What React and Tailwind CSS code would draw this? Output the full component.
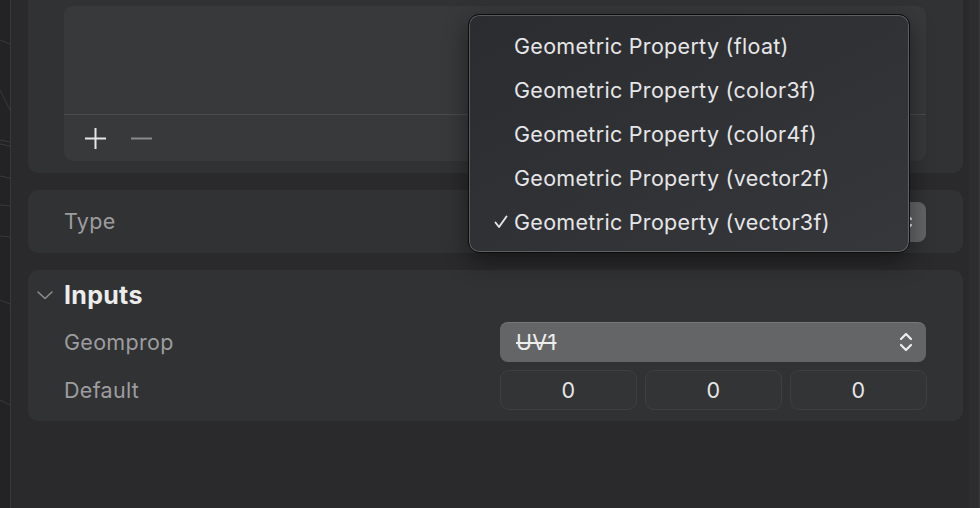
import React from "react";

const font = { fontFamily: "Inter, 'Noto Sans', sans-serif", letterSpacing: "0.3px" };

function UpDown({ className = "" }) {
  return (
    <svg width="14" height="22" viewBox="0 0 14 22" className={className} fill="none" stroke="currentColor" strokeWidth="2.2" strokeLinecap="round" strokeLinejoin="round">
      <polyline points="2,8 7,3 12,8" />
      <polyline points="2,14 7,19 12,14" />
    </svg>
  );
}

function Check() {
  return (
    <svg width="14" height="14" viewBox="0 0 14 14" fill="none" stroke="currentColor" strokeWidth="1.9" strokeLinecap="round" strokeLinejoin="round">
      <polyline points="1.5,7.5 5,12 12.5,1.5" />
    </svg>
  );
}

const items = [
  "Geometric Property (float)",
  "Geometric Property (color3f)",
  "Geometric Property (color4f)",
  "Geometric Property (vector2f)",
  "Geometric Property (vector3f)",
];

export default function App() {
  return (
    <div className="relative w-[980px] h-[508px] overflow-hidden flex bg-[#2a2a2c] antialiased" style={font}>
      {/* left viewport strip */}
      <div className="w-[11px] h-full bg-[#232324] border-r border-[#39393b] relative overflow-hidden">
        <svg width="10" height="508" className="absolute inset-0" stroke="#3a3a3a" strokeWidth="1">
          <line x1="0" y1="40" x2="10" y2="44" />
          <line x1="0" y1="90" x2="10" y2="110" />
          <line x1="0" y1="140" x2="10" y2="142" />
          <line x1="0" y1="176" x2="10" y2="178" />
          <line x1="0" y1="205" x2="10" y2="206" />
          <line x1="0" y1="236" x2="10" y2="237" />
          <line x1="0" y1="300" x2="10" y2="304" />
          <line x1="0" y1="400" x2="10" y2="405" />
          <line x1="0" y1="144" x2="10" y2="146" />
        </svg>
      </div>

      {/* main inspector */}
      <div className="flex-1 flex flex-col gap-[17px] pl-[17px] pr-[6px]">
        {/* top card (list) */}
        <div className="bg-[#313234] rounded-b-[10px] pt-[6px] pb-[12px] pl-[36px] pr-[37px]">
          <div className="bg-[#38393b] rounded-[9px] h-[155px] flex flex-col">
            <div className="flex-1 border-b border-[#4a4b4d]" />
            <div className="h-[46px] flex items-center pl-[21px] gap-[25px]">
              <svg width="21" height="21" viewBox="0 0 21 21" stroke="#e6e6e6" strokeWidth="2">
                <line x1="10.5" y1="0" x2="10.5" y2="21" />
                <line x1="0" y1="10.5" x2="21" y2="10.5" />
              </svg>
              <svg width="21" height="21" viewBox="0 0 21 21" stroke="#8a8a8c" strokeWidth="2">
                <line x1="0" y1="10.5" x2="21" y2="10.5" />
              </svg>
            </div>
          </div>
        </div>

        {/* Type card */}
        <div className="bg-[#313234] rounded-[10px] h-[63px] flex items-center pl-[36px] pr-[37px]">
          <span className="text-[21.5px] text-[#9d9d9f] w-[436px]">Type</span>
          <div className="flex-1 h-[40px] bg-[#646567] rounded-[8px] flex items-center justify-end pl-[16px] pr-[13px] text-[#ededed]">
            <UpDown />
          </div>
        </div>

        {/* Inputs card */}
        <div className="bg-[#313234] rounded-[10px] pt-[10px] pb-[11px] pl-[8px] pr-[37px] flex flex-col">
          <div className="flex items-center h-[30px]">
            <svg width="16" height="10" viewBox="0 0 16 10" fill="none" stroke="#8e8e90" strokeWidth="1.5" strokeLinecap="round" strokeLinejoin="round" className="ml-[1px] mr-[11px]">
              <polyline points="1,2 8,8.5 15,2" />
            </svg>
            <span className="text-[25px] font-bold text-[#ececec] leading-none">Inputs</span>
          </div>
          <div className="flex items-center mt-[12px] pl-[28px]">
            <span className="text-[21.5px] text-[#9d9d9f] w-[436px]">Geomprop</span>
            <div className="flex-1 h-[40px] bg-[#646567] rounded-[8px] flex items-center justify-between pl-[16px] pr-[13px] text-[#ededed] shadow-[inset_0_1px_0_rgba(255,255,255,0.12)]">
              <span className="text-[21.5px] line-through decoration-[2px]">UV1</span>
              <UpDown />
            </div>
          </div>
          <div className="flex items-center mt-[8px] pl-[28px]">
            <span className="text-[21.5px] text-[#9d9d9f] w-[436px]">Default</span>
            <div className="flex-1 grid grid-cols-3 gap-[8px] mr-[-1px]">
              {[0, 0, 0].map((v, i) => (
                <div key={i} className="h-[40px] rounded-[9px] border border-[#3e3f41] bg-[#333436] flex items-center justify-center text-[21.5px] text-[#e6e6e6]">
                  {v}
                </div>
              ))}
            </div>
          </div>
        </div>
      </div>

      {/* right strip */}
      <div className="w-[11px] h-full bg-[#2d2d2f] border-r border-[#3a3a3c]" />

      {/* dropdown menu */}
      <div className="absolute left-[468px] top-[14px] w-[442px] h-[239px] rounded-[11px] border border-[#0c0c0d] bg-gradient-to-br from-[#2a2c2f] to-[#35373b] shadow-[inset_0_0_0_1px_rgba(255,255,255,0.22),0_8px_24px_rgba(0,0,0,0.45)] pt-[9px]">
        {items.map((t, i) => (
          <div key={t} className="h-[44px] flex items-center text-[21.5px] text-[#e6e6e8]">
            <span className="w-[45px] flex justify-end pr-[6px] text-[#e6e6e8]">
              {i === 4 ? <Check /> : null}
            </span>
            <span>{t}</span>
          </div>
        ))}
      </div>
    </div>
  );
}
